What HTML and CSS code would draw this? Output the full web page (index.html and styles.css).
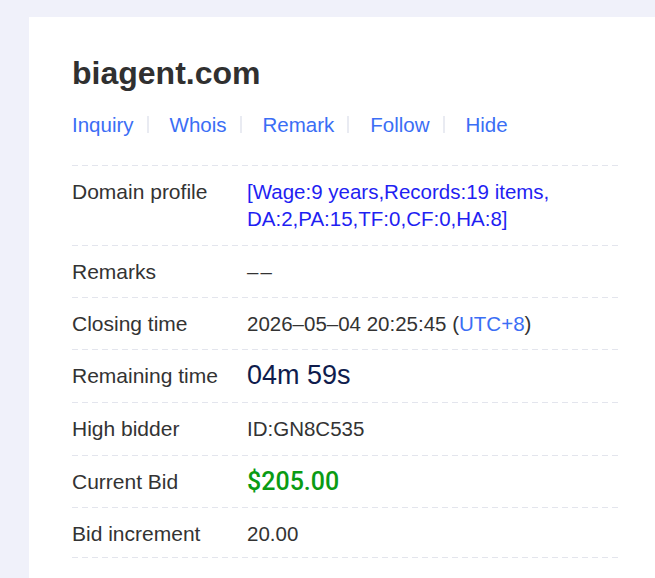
FILE: index.html
```html
<!DOCTYPE html>
<html lang="en">
<head>
<meta charset="utf-8">
<title>biagent.com</title>
<link rel="stylesheet" href="styles.css">
</head>
<body>
  <main class="card">
    <h1 class="domain">biagent.com</h1>
    <nav class="actions">
      <a class="action" href="#">Inquiry</a><span class="bar"></span>
      <a class="action" href="#">Whois</a><span class="bar"></span>
      <a class="action" href="#">Remark</a><span class="bar"></span>
      <a class="action" href="#">Follow</a><span class="bar"></span>
      <a class="action" href="#">Hide</a>
    </nav>
    <dl class="info">
      <div class="row row-wide">
        <dt class="label">Domain profile</dt>
        <dd class="value profile">[Wage:9 years,Records:19 items,<br>DA:2,PA:15,TF:0,CF:0,HA:8]</dd>
      </div>
      <div class="row">
        <dt class="label">Remarks</dt>
        <dd class="value empty">––</dd>
      </div>
      <div class="row">
        <dt class="label">Closing time</dt>
        <dd class="value">2026–05–04 20:25:45 (<span class="tz">UTC+8</span>)</dd>
      </div>
      <div class="row row-loose">
        <dt class="label">Remaining time</dt>
        <dd class="value countdown">04m 59s</dd>
      </div>
      <div class="row row-loose">
        <dt class="label">High bidder</dt>
        <dd class="value">ID:GN8C535</dd>
      </div>
      <div class="row">
        <dt class="label">Current Bid</dt>
        <dd class="value price">$205.00</dd>
      </div>
      <div class="row row-last">
        <dt class="label">Bid increment</dt>
        <dd class="value">20.00</dd>
      </div>
    </dl>
  </main>
</body>
</html>
```
FILE: styles.css
```css
html, body {
  margin: 0;
  padding: 0;
  background: #f0f1fa;
  overflow: hidden;
}

body {
  font-family: "Liberation Sans", Arial, sans-serif;
  color: #333;
  padding: 17px 0 0 29px;
  height: 578px;
  box-sizing: border-box;
}

.card {
  background: #fff;
  width: 640px;
  height: 100%;
  box-sizing: border-box;
  padding: 36px 50px 0 43px;
}

.domain {
  margin: 0;
  font-size: 32px;
  line-height: 40px;
  font-weight: 700;
  color: #303030;
}

.actions {
  display: flex;
  align-items: center;
  margin-top: 18px;
  height: 27px;
}

.action {
  font-size: 20.5px;
  line-height: 27px;
  color: #3b6ef5;
  text-decoration: none;
}

.bar {
  width: 2px;
  height: 17px;
  background: #e9ebf2;
  margin: 0 21px 0 13px;
}

.info {
  margin: 27px 0 0;
  padding: 0;
}

/* dashed divider drawn above each row */
.row {
  display: flex;
  padding: 13px 0 12px;
  background-image: repeating-linear-gradient(to right, #e3e5ed 0 6px, transparent 6px 10px);
  background-size: 100% 1px;
  background-repeat: no-repeat;
  background-position: left top;
}

.row-wide {
  padding-bottom: 13px;
}

.row-loose {
  padding-bottom: 13px;
}

.row-last {
  padding-bottom: 10px;
}

.info::after {
  content: "";
  display: block;
  height: 1px;
  background-image: repeating-linear-gradient(to right, #e3e5ed 0 6px, transparent 6px 10px);
}

.label {
  width: 175px;
  flex: none;
  font-size: 21px;
  line-height: 27px;
  color: #333;
}

.value {
  margin: 0;
  font-size: 20.5px;
  line-height: 27px;
  color: #333;
}

.empty {
  letter-spacing: 2px;
}

.profile {
  color: #1f1ff2;
}

.tz {
  color: #3b6ef5;
}

.countdown {
  font-size: 27px;
  color: #0f1c4d;
}

.price {
  font-family: Roboto, "Liberation Sans", sans-serif;
  font-weight: 500;
  font-size: 25px;
  color: #0a9b14;
}
```
